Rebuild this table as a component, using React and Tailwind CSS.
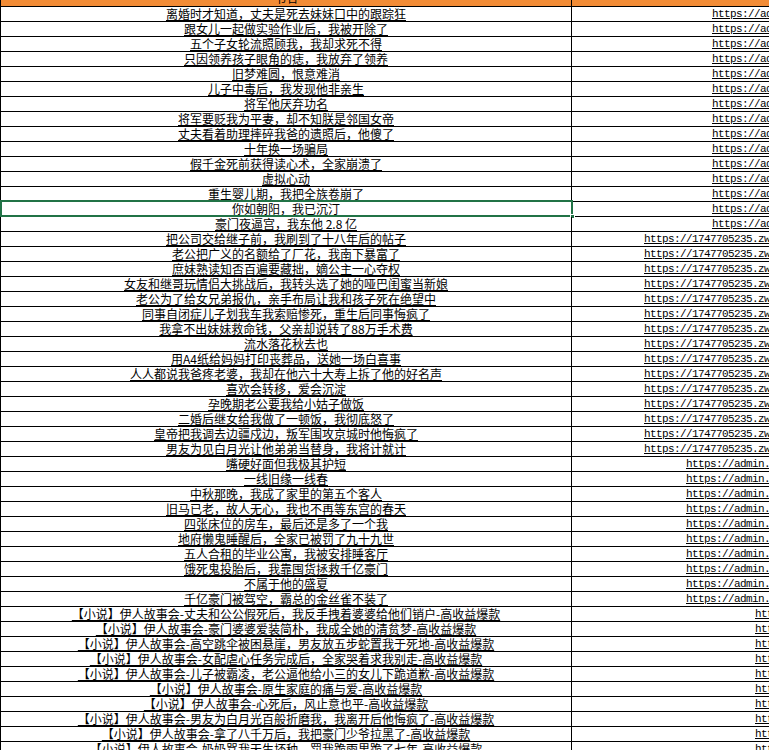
import React from "react";

const AD = "https://admin.example.com/book";
const ZW = "https://1747705235.zwsc.cn/book";
const ADM = "https://admin.";
const HT = "https://";

const rows = [
  ["离婚时才知道，丈夫是死去妹妹口中的跟踪狂", "ad"],
  ["跟女儿一起做实验作业后，我被开除了", "ad"],
  ["五个子女轮流照顾我，我却求死不得", "ad"],
  ["只因领养孩子眼角的痣，我放弃了领养", "ad"],
  ["旧梦难圆，恨意难消", "ad"],
  ["儿子中毒后，我发现他非亲生", "ad"],
  ["将军他厌弃功名", "ad"],
  ["将军要贬我为平妻，却不知朕是邻国女帝", "ad"],
  ["丈夫看着助理摔碎我爸的遗照后，他傻了", "ad"],
  ["十年换一场骗局", "ad"],
  ["假千金死前获得读心术，全家崩溃了", "ad"],
  ["虚拟心动", "ad"],
  ["重生婴儿期，我把全族卷崩了", "ad"],
  ["你如朝阳，我已沉汀", "ad"],
  ["豪门夜逼宫，我东他 2.8 亿", "ad"],
  ["把公司交给继子前，我刷到了十八年后的帖子", "zw"],
  ["老公把广义的名额给了厂花，我南下暴富了", "zw"],
  ["庶妹熟读知否百遍要藏拙，嫡公主一心夺权", "zw"],
  ["女友和继哥玩情侣大挑战后，我转头选了她的哑巴闺蜜当新娘", "zw"],
  ["老公为了给女兄弟报仇，亲手布局让我和孩子死在绝望中", "zw"],
  ["同事自闭症儿子划我车我索赔惨死，重生后同事悔疯了", "zw"],
  ["我拿不出妹妹救命钱，父亲却说转了88万手术费", "zw"],
  ["流水落花秋去也", "zw"],
  ["用A4纸给妈妈打印丧葬品，送她一场白喜事", "zw"],
  ["人人都说我爸疼老婆，我却在他六十大寿上拆了他的好名声", "zw"],
  ["喜欢会转移，爱会沉淀", "zw"],
  ["孕晚期老公要我给小姑子做饭", "zw"],
  ["二婚后继女给我做了一顿饭，我彻底怒了", "zw"],
  ["皇帝把我调去边疆戍边，叛军围攻京城时他悔疯了", "zw"],
  ["男友为见白月光让他弟弟当替身，我将计就计", "zw"],
  ["嘴硬好面但我极其护短", "adm"],
  ["一线旧缘一线春", "adm"],
  ["中秋那晚，我成了家里的第五个客人", "adm"],
  ["旧马已老，故人无心，我也不再等东宫的春天", "adm"],
  ["四张床位的房车，最后还是多了一个我", "adm"],
  ["地府懒鬼睡醒后，全家已被罚了九十九世", "adm"],
  ["五人合租的毕业公寓，我被安排睡客厅", "adm"],
  ["饿死鬼投胎后，我靠囤货拯救千亿豪门", "adm"],
  ["不属于他的盛夏", "adm"],
  ["千亿豪门被驾空，霸总的金丝雀不装了", "adm"],
  ["【小说】伊人故事会-丈夫和公公假死后，我反手拽着婆婆给他们销户-高收益爆款", "ht"],
  ["【小说】伊人故事会-豪门婆婆爱装简朴，我成全她的清贫梦-高收益爆款", "ht"],
  ["【小说】伊人故事会-高空跳伞被困悬崖，男友放五步蛇置我于死地-高收益爆款", "ht"],
  ["【小说】伊人故事会-女配虐心任务完成后，全家哭着求我别走-高收益爆款", "ht"],
  ["【小说】伊人故事会-儿子被霸凌，老公逼他给小三的女儿下跪道歉-高收益爆款", "ht"],
  ["【小说】伊人故事会-原生家庭的痛与爱-高收益爆款", "ht"],
  ["【小说】伊人故事会-心死后，风止意也平-高收益爆款", "ht"],
  ["【小说】伊人故事会-男友为白月光百般折磨我，我离开后他悔疯了-高收益爆款", "ht"],
  ["【小说】伊人故事会-拿了八千万后，我把豪门少爷拉黑了-高收益爆款", "ht"],
  ["【小说】伊人故事会-奶奶骂我天生坏种，罚我跪雨里跪了七年-高收益爆款", "ht"],
];

const linkCls = {
  ad: "pl-[140px]",
  zw: "pl-[72px]",
  adm: "pl-[114px]",
  ht: "pl-[183px]",
};

const linkText = { ad: AD, zw: ZW, adm: ADM, ht: HT };

const Row = ({ title, kind, selected }) => (
  <div className="relative flex h-[15px] border-b border-black">
    <div className="w-[572px] shrink-0 border-l border-r border-black flex items-center justify-center whitespace-nowrap text-[12px] leading-[14px] text-black font-['Noto_Sans_CJK_SC',sans-serif]">
      <span className="underline underline-offset-[1px] decoration-[1px]">{title}</span>
    </div>
    <div className={`flex-1 overflow-hidden whitespace-nowrap flex items-center text-[11px] tracking-[-0.6px] leading-[14px] text-black font-['Liberation_Mono',monospace] ${linkCls[kind]}`}>
      <span className="underline underline-offset-[1px]">{linkText[kind]}</span>
    </div>
    {selected && (
      <div className="absolute left-0 top-[-2px] w-[573px] h-[17px] border-2 border-[#217346] pointer-events-none">
        <div className="absolute right-[-4px] bottom-[-4px] w-[5px] h-[5px] bg-[#217346] border border-white" />
      </div>
    )}
  </div>
);

export default function App() {
  return (
    <div className="w-[769px] h-[750px] overflow-hidden bg-white">
      {/* header row, scrolled so only its lower edge shows */}
      <div className="flex h-[7px] border-b border-black bg-[#f28c36] overflow-hidden">
        <div className="w-[572px] shrink-0 border-l border-r border-black flex justify-center">
          <div className="-mt-[9px] text-[12px] leading-[14px] font-['Noto_Sans_CJK_SC',sans-serif] text-black">
            书名
          </div>
        </div>
        <div className="flex-1" />
      </div>
      {rows.map(([title, kind], i) => (
        <Row key={i} title={title} kind={kind} selected={i === 13} />
      ))}
    </div>
  );
}
